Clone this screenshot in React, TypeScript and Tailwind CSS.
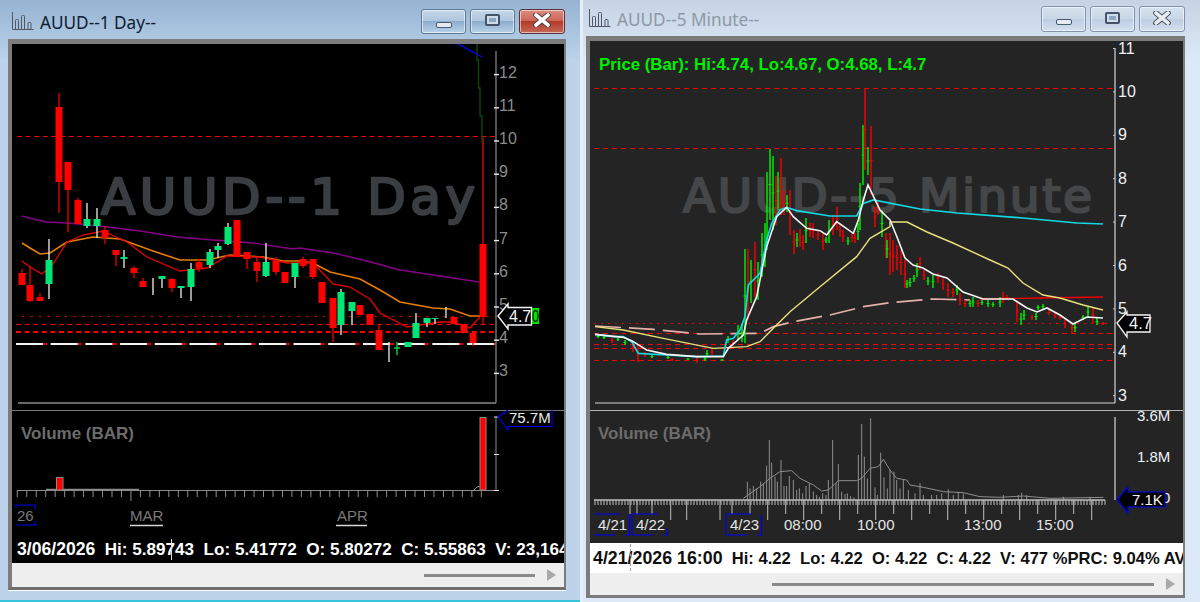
import React from "react";

type Candle = [number, number, number, number, number, "r" | "g"];
type Bar = [number, number, number, "r" | "g"];
type P = [number, number];

const pts = (a: P[]) => a.map((p) => p.join(",")).join(" ");
const zoomed = (ox: number, oy: number, a: P[]): P[] =>
	a.map(([x, y]) => [ox + x / 3, oy + y / 3] as P);

// x, wick top, wick bottom, body top, body bottom
const dayCandles: Candle[] = [
	[22, 269, 285, 273, 285, "r"],
	[30, 266, 302, 285, 301, "r"],
	[40, 293, 301, 297, 301, "r"],
	[49, 239, 299, 260, 284, "g"],
	[59, 93, 213, 107, 182, "r"],
	[68, 162, 232, 162, 190, "r"],
	[78, 198, 224, 200, 224, "r"],
	[87, 203, 228, 219, 226, "g"],
	[97, 208, 238, 219, 226, "g"],
	[105, 226, 244, 230, 238, "r"],
	[116, 250, 266, 250, 255, "r"],
	[124, 250, 268, 257, 259, "g"],
	[134, 266, 278, 268, 273, "r"],
	[143, 278, 287, 281, 287, "r"],
	[153, 278, 295, 286, 286, "g"],
	[162, 276, 288, 276, 279, "g"],
	[172, 278, 292, 279, 288, "r"],
	[181, 286, 298, 286, 288, "g"],
	[191, 263, 301, 269, 287, "g"],
	[199, 259, 272, 262, 268, "r"],
	[210, 249, 268, 252, 265, "g"],
	[218, 243, 258, 246, 250, "g"],
	[228, 223, 245, 227, 244, "g"],
	[237, 220, 257, 220, 257, "r"],
	[247, 252, 269, 252, 259, "r"],
	[257, 257, 282, 262, 271, "r"],
	[266, 243, 277, 262, 276, "g"],
	[276, 257, 275, 261, 272, "r"],
	[285, 272, 283, 272, 283, "r"],
	[295, 263, 288, 263, 277, "g"],
	[303, 257, 268, 259, 266, "r"],
	[313, 259, 279, 259, 277, "r"],
	[322, 282, 303, 282, 303, "r"],
	[333, 298, 342, 298, 328, "r"],
	[341, 289, 335, 292, 325, "g"],
	[352, 302, 325, 302, 311, "g"],
	[360, 305, 315, 305, 315, "r"],
	[370, 314, 325, 314, 325, "r"],
	[379, 325, 350, 330, 350, "r"],
	[389, 342, 362, 342, 342, "g"],
	[408, 342, 347, 342, 347, "g"],
	[416, 313, 338, 323, 338, "g"],
	[427, 318, 327, 318, 323, "g"],
	[435, 318, 324, 318, 319, "g"],
	[446, 307, 318, 307, 307, "g"],
	[454, 317, 324, 317, 324, "r"],
	[464, 324, 333, 324, 333, "r"],
	[473, 333, 346, 333, 343, "r"],
	[483, 137, 324, 244, 317, "r"],
];

const dayPurple: P[] = [[22, 216], [33, 219], [47, 222], [67, 223], [100, 226], [140, 231], [177, 237], [213, 240], [253, 243], [293, 249], [300, 248], [333, 253], [367, 261], [400, 270], [440, 276], [479, 282]];
const dayOrange: P[] = [[22, 243], [30, 248], [40, 254], [50, 253], [67, 242], [93, 237], [120, 239], [153, 251], [180, 260], [207, 260], [230, 255], [263, 257], [283, 261], [300, 261], [313, 263], [330, 272], [360, 279], [380, 290], [400, 302], [433, 308], [450, 309], [470, 316], [480, 316]];
const dayRed: P[] = [[22, 261], [30, 267], [42, 274], [53, 264], [67, 242], [83, 235], [103, 231], [127, 242], [147, 257], [180, 271], [207, 268], [227, 256], [260, 257], [287, 263], [313, 263], [333, 284], [350, 287], [370, 299], [380, 313], [407, 327], [440, 322], [453, 322], [470, 328], [480, 317]];

const minuteBars: Bar[] = [
	[598, 335, 338, "g"], [604, 336, 339, "g"], [612, 338, 343, "r"], [618, 338, 341, "g"], [625, 340, 345, "g"],
	[633, 342, 352, "r"], [638, 345, 362, "r"], [645, 352, 357, "r"], [652, 355, 358, "g"], [668, 356, 359, "g"],
	[672, 358, 361, "r"], [688, 358, 360, "g"], [697, 357, 363, "r"], [705, 357, 361, "g"], [707, 350, 357, "g"],
	[712, 349, 355, "r"], [722, 359, 361, "g"], [728, 336, 343, "g"], [733, 340, 346, "r"], [738, 325, 340, "g"],
	[742, 324, 342, "g"], [745, 249, 343, "g"], [748, 249, 320, "r"], [751, 260, 303, "g"], [755, 242, 297, "r"],
	[758, 262, 300, "g"], [762, 233, 277, "g"], [765, 223, 267, "g"], [767, 172, 250, "g"], [770, 149, 220, "g"],
	[773, 156, 230, "g"], [776, 176, 225, "r"], [778, 172, 210, "g"], [781, 158, 215, "r"], [784, 190, 215, "r"],
	[787, 195, 212, "g"], [790, 190, 235, "r"], [794, 230, 254, "r"], [797, 233, 247, "g"], [800, 229, 247, "r"],
	[803, 235, 250, "r"], [806, 218, 243, "g"], [810, 223, 237, "r"], [813, 223, 238, "r"], [818, 230, 240, "r"],
	[823, 233, 250, "r"], [826, 237, 243, "g"], [829, 220, 243, "g"], [833, 215, 235, "r"], [837, 207, 230, "r"],
	[840, 223, 237, "r"], [843, 230, 242, "r"], [848, 237, 245, "g"], [852, 233, 242, "r"], [855, 233, 243, "r"],
	[858, 223, 240, "g"], [860, 183, 230, "g"], [863, 125, 185, "g"], [865, 89, 170, "r"], [868, 147, 175, "g"],
	[871, 126, 195, "r"], [875, 207, 227, "r"], [878, 200, 215, "r"], [882, 210, 237, "g"], [886, 233, 258, "r"],
	[887, 240, 258, "g"], [890, 233, 275, "r"], [893, 240, 272, "r"], [897, 245, 270, "r"], [901, 250, 275, "r"],
	[905, 260, 288, "r"], [907, 280, 288, "g"], [910, 278, 287, "g"], [914, 275, 282, "g"], [917, 263, 277, "g"],
	[920, 257, 270, "r"], [924, 270, 280, "r"], [928, 277, 285, "g"], [933, 275, 288, "g"], [938, 273, 283, "r"],
	[943, 278, 290, "r"], [948, 283, 297, "r"], [953, 288, 297, "r"], [957, 285, 295, "g"], [960, 293, 305, "r"],
	[965, 300, 307, "r"], [970, 300, 307, "g"], [973, 297, 307, "g"], [978, 300, 307, "r"], [982, 300, 305, "g"],
	[988, 300, 307, "g"], [993, 302, 307, "g"], [1000, 297, 307, "g"], [1003, 292, 303, "r"], [1007, 295, 300, "r"],
	[1017, 302, 322, "r"], [1021, 313, 325, "g"], [1024, 310, 320, "g"], [1032, 315, 320, "r"], [1036, 313, 320, "g"],
	[1038, 305, 310, "g"], [1043, 304, 309, "g"], [1049, 310, 315, "r"], [1055, 312, 318, "r"], [1060, 315, 320, "r"],
	[1065, 320, 328, "r"], [1072, 323, 333, "r"], [1075, 323, 332, "g"], [1083, 315, 320, "g"], [1088, 307, 317, "g"],
	[1093, 307, 323, "r"], [1097, 318, 325, "g"], [1103, 322, 325, "r"],
];

const minuteCyan: P[] = [
	...zoomed(580, 200, [[45, 403], [100, 410], [130, 410], [155, 425], [175, 460], [260, 465], [350, 470], [430, 468], [440, 420], [460, 415], [480, 390], [495, 350], [505, 255], [540, 220], [560, 120], [575, 70], [600, 30], [620, 22], [650, 32], [750, 48], [830, 48], [850, 10], [880, 0]]),
	[920, 209], [957, 213], [1023, 218], [1077, 223], [1103, 224],
];
const minuteWhite: P[] = [
	...zoomed(580, 200, [[45, 403], [130, 412], [155, 422], [200, 450], [260, 463], [350, 470], [430, 470], [445, 445], [490, 405], [500, 360], [530, 290], [560, 140], [590, 50], [620, 22], [640, 50], [680, 85], [720, 92], [740, 105], [770, 65], [820, 100], [835, 60], [850, 0]]),
	[868, 185], [880, 210], [890, 220], [897, 237], [905, 258], [913, 265], [923, 268], [933, 274], [947, 278], [963, 292], [983, 299], [1013, 299], [1027, 308], [1037, 312], [1047, 308], [1060, 315], [1073, 324], [1087, 317], [1103, 318],
];
const minuteYellow: P[] = [
	...zoomed(580, 200, [[45, 380], [130, 390], [250, 415], [400, 445], [500, 440], [540, 425], [580, 385], [630, 335], [720, 260], [830, 170], [870, 115], [930, 80]]),
	[890, 222], [907, 222], [927, 232], [953, 243], [990, 260], [1008, 268], [1023, 283], [1043, 295], [1060, 298], [1083, 305], [1103, 310],
];
const minutePink: P[] = [
	...zoomed(580, 200, [[45, 378], [220, 388], [360, 402], [540, 400], [580, 380], [640, 365], [750, 345], [850, 320], [930, 308]]),
	[933, 299], [970, 300],
];

const volBars: P[] = [
	...zoomed(580, 400, [[502, 245], [510, 265], [520, 258], [530, 265], [542, 245], [550, 250], [560, 197], [568, 120], [575, 188], [585, 230], [592, 245], [603, 180], [612, 258], [620, 258], [628, 228], [640, 240], [650, 270], [658, 265], [668, 280], [678, 258], [688, 250], [700, 275], [710, 285], [718, 290], [728, 280], [738, 285], [745, 240], [758, 120], [768, 250], [775, 192], [785, 275], [795, 282], [802, 280], [812, 288], [822, 292], [835, 165], [845, 72], [853, 170], [862, 235], [872, 55], [885, 262], [892, 285], [902, 158], [912, 232], [922, 265]]),
	...zoomed(890, 400, [[0, 210], [12, 215], [20, 240], [30, 265], [40, 240], [55, 270], [75, 280], [90, 250], [100, 285], [125, 285], [140, 285], [155, 280], [175, 268], [190, 285], [205, 275], [220, 280], [340, 285], [385, 285], [395, 278], [410, 285], [520, 290], [600, 290]]),
];
const volAvg: P[] = [
	...zoomed(580, 400, [[490, 295], [540, 260], [570, 235], [600, 215], [635, 212], [660, 235], [700, 255], [725, 273], [745, 270], [775, 242], [830, 242], [845, 235], [870, 205], [895, 200], [910, 178]]),
	...zoomed(890, 400, [[0, 210], [20, 235], [50, 240], [60, 255], [100, 262], [160, 275], [220, 278], [270, 290], [330, 292], [400, 288], [480, 295], [640, 292]]),
];

const dayTicks = Array.from({ length: 50 }, (_, i) => 17.3 + i * 9.47);
const minuteTicks = Array.from({ length: 171 }, (_, i) => 595 + i * 3);
const longTicks = [670.7, 686.7, 720, 767.7, 803.7, 839.7, 875.7, 911.7, 947.7, 983.7, 1019.7, 1055.7, 1091.7];
const midTicks = [630, 637, 652, 732, 750, 785.7, 821.7, 857.7, 893.7, 929.7, 965.7, 1001.7, 1037.7, 1073.7];

const ChartIcon = () => (
	<svg width="23" height="19" viewBox="0 0 23 19" fill="none" stroke="#4f5864" strokeWidth="1">
		<path d="M1.5 0v17.5h21M4.5 17V8.5q0-1 1-1h1q1 0 1 1V17M10.5 17V4.5q0-1 1-1h1q1 0 1 1V17M17 17v-5.5q0-1 1-1h1q1 0 1 1V17" />
	</svg>
);

const WinButton = ({ kind, faded }: { kind: "min" | "max" | "close"; faded?: boolean }) => {
	const skin =
		kind === "close" && !faded
			? "border-[#5c2f3c] bg-[linear-gradient(#dc8d80,#cb6555_48%,#b23a28_50%,#c66a58)]"
			: faded
				? "border-[#7f93b0] bg-[linear-gradient(#d7e2ee,#c9d7e7_48%,#bccde0_50%,#d3e0ef)]"
				: "border-[#5f7a96] bg-[linear-gradient(#c6d7e9,#adc5de_48%,#8fadcc_50%,#b8d2e9)]";
	return (
		<div className={`flex items-center justify-center ${kind === "close" ? "w-[46px]" : "w-[45px]"} h-full rounded-[3px] border ${skin} shadow-[inset_0_0_0_1px_rgba(255,255,255,0.55)]`}>
			{kind === "min" && <div className="w-[16px] h-[6px] mt-[6px] rounded-[2px] border border-[#475a72] bg-[#e6ebf1]" />}
			{kind === "max" && (
				<div className="w-[15px] h-[12px] mb-[3px] rounded-[2px] border-2 border-[#43536a] bg-[#cfdbe8] flex items-center justify-center">
					<div className="w-[7px] h-[4px] bg-[#8ea5bf]" />
				</div>
			)}
			{kind === "close" && (
				<svg width="20" height="14" viewBox="0 0 20 14" className="mb-[3px]">
					<path d="M4 2l12 10M16 2L4 12" stroke="#3c3c46" strokeWidth="5.5" strokeLinecap="round" />
					<path d="M4 2l12 10M16 2L4 12" stroke={faded ? "#e8edf3" : "#ffffff"} strokeWidth="3.6" strokeLinecap="round" />
				</svg>
			)}
		</div>
	);
};

const ScrollPart = ({ width, right }: { width: string; right: string }) => (
	<div className={`flex items-center h-full justify-end ${right}`}>
		<div className={`${width} h-[3px] bg-[#8a8a8a]`} />
		<svg width="9" height="12" viewBox="0 0 9 12" className="ml-[12px]">
			<path d="M0 0l9 6-9 6z" fill="#a9a9a9" />
		</svg>
	</div>
);

const DayChart = () => (
	<svg viewBox="12 44 552 366" className="block w-[552px] h-[366px]" fontFamily="'Liberation Sans', Arial, sans-serif">
		<text x="101" y="214" fontFamily="'DejaVu Sans', sans-serif" fontWeight="400" fontSize="50" fill="#3a3d41" stroke="#3a3d41" strokeWidth="2.4" strokeLinejoin="round" textLength="374" lengthAdjust="spacing">AUUD--1 Day</text>
		<g strokeWidth="1">
			<line x1="17" x2="497" y1="136.5" y2="136.5" stroke="#ff0000" strokeDasharray="5 3.6" />
			<line x1="22" x2="497" y1="316.5" y2="316.5" stroke="#ee0000" strokeDasharray="2 6.6" />
			<line x1="16" x2="497" y1="324.5" y2="324.5" stroke="#ff0000" strokeDasharray="5 3.6" />
			<line x1="16" x2="497" y1="332" y2="332" stroke="#ff0000" strokeWidth="2" strokeDasharray="5 3.6" />
			<line x1="16" x2="496" y1="344" y2="344" stroke="#e00000" strokeWidth="2" strokeDasharray="31 3.7" />
			<line x1="16" x2="496" y1="344" y2="344" stroke="#f5f5f5" strokeWidth="2" strokeDasharray="27 7.7" />
		</g>
		<polyline points={pts(dayPurple)} fill="none" stroke="#860086" strokeWidth="1.4" />
		<polyline points={pts(dayOrange)} fill="none" stroke="#e67e00" strokeWidth="1.6" />
		<polyline points={pts(dayRed)} fill="none" stroke="#e80000" strokeWidth="1.3" />
		{dayCandles.map(([x, wt, wb, bt, bb, c]) => (
			<g key={x}>
				<line x1={x} x2={x} y1={wt} y2={wb} stroke={c === "r" ? "#f00000" : "#f0f0f0"} strokeWidth="1.3" />
				{bb > bt && <rect x={x - 3.5} y={bt} width="7" height={bb - bt} fill={c === "r" ? "#ff0000" : "#00e676"} />}
			</g>
		))}
		<path d="M397 342v13M394 348h6" stroke="#00c838" strokeWidth="1.5" />
		<polyline points="477,44 477,60 478.5,60 478.5,88 480,88 480,116 482,116 482,143" fill="none" stroke="#0c4d0c" strokeWidth="1.3" />
		<line x1="457" y1="43.5" x2="482" y2="57" stroke="#0000ff" strokeWidth="1.3" />
		<line x1="18" x2="496" y1="403" y2="403" stroke="#8a8a8a" strokeWidth="1.5" />
		<line x1="496" x2="496" y1="51" y2="403" stroke="#8a8a8a" strokeWidth="1.2" />
		{[12, 11, 10, 9, 8, 7, 6, 5, 4, 3].map((v) => {
			const y = 74.6 + (12 - v) * 33.2;
			return (
				<g key={v}>
					<line x1="494" x2="499" y1={y} y2={y} stroke="#e8e8e8" strokeWidth="1.4" />
					<text x="499" y={y + 3} fontSize="16" fill="#8c8c8c">{v}</text>
				</g>
			);
		})}
		<polygon points="498,316 508,304 508,307.5 531.5,307.5 531.5,325 508,325 508,329" fill="#000" stroke="#f5f5f5" strokeWidth="1.4" />
		<rect x="532" y="308" width="7" height="16" fill="#00e600" />
		<text x="532" y="322" fontSize="16" fill="#000" textLength="7" lengthAdjust="spacingAndGlyphs">0</text>
		<text x="509" y="322" fontSize="16" fill="#f5f5f5">4.7</text>
	</svg>
);

const DayVolume = () => (
	<svg viewBox="12 410 552 125" className="block w-[552px] h-[125px]" fontFamily="'Liberation Sans', Arial, sans-serif">
		<line x1="12" x2="564" y1="410.5" y2="410.5" stroke="#777" />
		<text x="21" y="439" fontSize="17" fontWeight="700" fill="#6c6c6c">Volume (BAR)</text>
		<line x1="17" x2="497" y1="490.5" y2="490.5" stroke="#8a8a8a" />
		<line x1="46" x2="139" y1="489.5" y2="489.5" stroke="#8a8a8a" strokeWidth="1.4" />
		{dayTicks.map((x, i) => (
			<line key={i} x1={x} x2={x} y1="490" y2={x > 129 && x < 132 || x > 336 && x < 338 ? 501 : 497} stroke="#909090" />
		))}
		<rect x="56.5" y="477.5" width="6.5" height="12.5" fill="#ff0000" stroke="#8a8a8a" />
		<rect x="480" y="417.5" width="6" height="72.5" fill="#ff0000" stroke="#8a8a8a" />
		<path d="M474 490q3-4 6-4" fill="none" stroke="#8a8a8a" />
		<line x1="496" x2="496" y1="417" y2="490" stroke="#8a8a8a" />
		<path d="M494 417h5M494 454.5h5M494 490.5h5" stroke="#e0e0e0" />
		<polygon points="498,417 508,410 508,413 552,413 552,426 508,426 508,430" fill="#000" />
		<path d="M552 410v16.5H508v3.5L498 417l10-7" fill="none" stroke="#0000f0" strokeWidth="1.2" />
		<text x="509" y="423" fontSize="15" fill="#e8e8e8">75.7M</text>
		<path d="M16 508v-3h19v4M16.5 525h18.5v-4" fill="none" stroke="#0000f0" strokeWidth="1.2" />
		<text x="17" y="521" fontSize="15" fill="#7a7a7a">26</text>
		<text x="130" y="521" fontSize="15" fill="#7a7a7a">MAR</text>
		<line x1="130" x2="163" y1="525.5" y2="525.5" stroke="#d8d8d8" strokeWidth="1.5" />
		<text x="337" y="521" fontSize="15" fill="#7a7a7a">APR</text>
		<line x1="336" x2="367" y1="525.5" y2="525.5" stroke="#d8d8d8" strokeWidth="1.5" />
	</svg>
);

const MinuteChart = () => (
	<svg viewBox="590 41 593 369" className="block w-[593px] h-[369px]" fontFamily="'Liberation Sans', Arial, sans-serif">
		<text x="683" y="212" fontFamily="'DejaVu Sans', sans-serif" fontWeight="400" fontSize="47" fill="#444648" stroke="#444648" strokeWidth="2.2" strokeLinejoin="round" textLength="409" lengthAdjust="spacing">AUUD--5 Minute</text>
		<text x="599" y="70" fontSize="16.8" fontWeight="700" fill="#00f000">{"Price (Bar): Hi:4.74, Lo:4.67, O:4.68, L:4.7"}</text>
		{[88.5, 148.5, 333.5, 344.5, 348.5, 360.5].map((y) => (
			<line key={y} x1="594" x2="1112" y1={y} y2={y} stroke="#ff0000" strokeWidth="1" strokeDasharray="5 4" />
		))}
		<line x1="594" x2="1112" y1="323.5" y2="323.5" stroke="#ee0000" strokeWidth="1" strokeDasharray="2 5" />
		<polyline points={pts(minutePink)} fill="none" stroke="#e5b0aa" strokeWidth="1.7" strokeDasharray="26 8" />
		<polyline points="980,299 1040,298 1103,297" fill="none" stroke="#f00000" strokeWidth="1.4" />
		{minuteBars.map(([x, t, b, c], i) => (
			<g key={i} stroke={c === "r" ? "#f00000" : "#00e800"}>
				<line x1={x} x2={x} y1={t} y2={b} strokeWidth="1.5" />
				<line x1={x - 1.5} x2={x + 1.5} y1={(t + b) / 2} y2={(t + b) / 2} strokeWidth="1" />
			</g>
		))}
		<polyline points={pts(minuteYellow)} fill="none" stroke="#e8e07c" strokeWidth="1.4" />
		<polyline points={pts(minuteCyan)} fill="none" stroke="#12d8e4" strokeWidth="1.7" />
		<polyline points={pts(minuteWhite)} fill="none" stroke="#f4f4f4" strokeWidth="1.6" />
		<line x1="595" x2="1115" y1="403" y2="403" stroke="#9a9a9a" strokeWidth="1.5" />
		<line x1="1115" x2="1115" y1="48" y2="403" stroke="#c8c8c8" strokeWidth="1.3" />
		{[11, 10, 9, 8, 7, 6, 5, 4, 3].map((v) => {
			const y = 48.5 + (11 - v) * 43.4;
			return (
				<g key={v}>
					<line x1="1113" x2="1115" y1={y} y2={y} stroke="#c8c8c8" />
					<text x="1118" y={y + 5} fontSize="16" fill="#eef2f6">{v}</text>
				</g>
			);
		})}
		<polygon points="1117,323 1127,312 1127,315 1150,315 1150,332 1127,332 1127,337" fill="#000" stroke="#f5f5f5" strokeWidth="1.3" />
		<text x="1129" y="329" fontSize="16.5" fill="#f5f5f5">4.7</text>
	</svg>
);

const MinuteVolume = () => (
	<svg viewBox="590 410 593 133" className="block w-[593px] h-[133px]" fontFamily="'Liberation Sans', Arial, sans-serif">
		<line x1="590" x2="1183" y1="410.5" y2="410.5" stroke="#b4b4b4" />
		<text x="598" y="439" fontSize="17" fontWeight="700" fill="#6c6c6c">Volume (BAR)</text>
		{volBars.map(([x, y], i) => (
			<line key={i} x1={x} x2={x} y1={y} y2="500" stroke="#8e8e8e" strokeWidth="1" />
		))}
		<polyline points={pts(volAvg)} fill="none" stroke="#8e8e8e" strokeWidth="1" />
		<line x1="594" x2="1105" y1="500" y2="500" stroke="#bdbdbd" strokeWidth="1.5" />
		{minuteTicks.map((x) => (
			<line key={x} x1={x} x2={x} y1="500" y2="505" stroke="#bdbdbd" />
		))}
		{longTicks.map((x) => (
			<line key={x} x1={x} x2={x} y1="500" y2="520" stroke="#bdbdbd" />
		))}
		{midTicks.map((x) => (
			<line key={x} x1={x} x2={x} y1="500" y2="514" stroke="#bdbdbd" />
		))}
		<line x1="1115" x2="1115" y1="417" y2="500" stroke="#c8c8c8" strokeWidth="1.3" />
		<text x="1137" y="421" fontSize="15" fill="#eef2f6">3.6M</text>
		<text x="1137" y="462" fontSize="15" fill="#eef2f6">1.8M</text>
		<text x="1162" y="503" fontSize="15" fill="#eef2f6">0</text>
		<polygon points="1117,499.5 1128,487 1128,492 1165,492 1165,507 1128,507 1128,513" fill="#000" stroke="#0000f0" strokeWidth="1.2" />
		<text x="1132" y="505" fontSize="15" fill="#f5f5f5">7.1K</text>
		<path d="M594 514h26M594 535h21M625 535h4.5V514M632 535v-21h26M632 535h21M663 535h4.5v-7M726 535v-21h26M726 535h21M757 535h4.5v-20" fill="none" stroke="#0000f0" strokeWidth="1.2" />
		<text x="598" y="530" fontSize="15" fill="#e6e6e6">4/21</text>
		<text x="636" y="530" fontSize="15" fill="#e6e6e6">4/22</text>
		<text x="730" y="530" fontSize="15" fill="#e6e6e6">4/23</text>
		<text x="784" y="530" fontSize="15" fill="#e6e6e6">08:00</text>
		<text x="857" y="530" fontSize="15" fill="#e6e6e6">10:00</text>
		<text x="964" y="530" fontSize="15" fill="#e6e6e6">13:00</text>
		<text x="1036" y="530" fontSize="15" fill="#e6e6e6">15:00</text>
	</svg>
);

export default function App() {
	return (
		<div className="flex w-[1200px] h-[602px] overflow-hidden bg-[#e6eff8] font-['Liberation_Sans',Arial,sans-serif]">
			{/* active window */}
			<div className="flex flex-col w-[580px] h-full bg-linear-to-b from-[#95b3d2] from-0% to-[#bcd3ea] to-[10%] border-b-2 border-b-[#35c3dc]">
				<div className="flex items-start h-[39px] pt-[9px] pl-[11px] pr-[15px]">
					<div className="mt-[3px]">
						<ChartIcon />
					</div>
					<span className="ml-[6px] mt-[2px] text-[17.2px] leading-[23px] text-[#0f2033] font-['Noto_Sans',sans-serif]">AUUD--1 Day--</span>
					<div className="flex gap-[4px] h-[25px] ml-auto">
						<WinButton kind="min" />
						<WinButton kind="max" />
						<WinButton kind="close" />
					</div>
				</div>
				<div className="w-[558px] ml-[8px] border-l-4 border-r-2 border-t-[5px] border-b-[3px] border-x-[#7c7c7c] border-t-[#7c7c7c] border-b-[#6e6e6e] bg-black shadow-[0_1px_0_#ffffff]">
					<DayChart />
					<DayVolume />
					<div className="relative h-[28px] pl-[5px] leading-[28px] text-[17.1px] font-bold text-white whitespace-pre overflow-hidden bg-black">
						<span className="text-[17.6px]">3/06/2026</span>
						{"  Hi: 5.89743  Lo: 5.41772  O: 5.80272  C: 5.55863  V: 23,164,592"}
						<div className="absolute left-[159px] top-[4px] w-px h-[21px] bg-[#d8d8d8]" />
					</div>
					<div className="h-[24px] bg-[#eeeeee]">
						<ScrollPart width="w-[111px]" right="pr-[8px]" />
					</div>
				</div>
			</div>
			{/* inactive window */}
			<div className="flex flex-col w-[617px] h-full ml-[3px] bg-linear-to-b from-[#c5d3e3] to-[#dde9f6] to-[10%]">
				<div className="flex items-start h-[36px] pt-[6px] pl-[5px] pr-[15px]">
					<div className="mt-[3px]">
						<ChartIcon />
					</div>
					<span className="ml-[6px] mt-[2px] text-[17.2px] leading-[23px] text-[#8d98a6] font-['Noto_Sans',sans-serif]">AUUD--5 Minute--</span>
					<div className="flex gap-[4px] h-[26px] ml-auto">
						<WinButton kind="min" faded />
						<WinButton kind="max" faded />
						<WinButton kind="close" faded />
					</div>
				</div>
				<div className="w-[599px] ml-[3px] border-l-4 border-r-2 border-t-[5px] border-b-[3px] border-[#7c7c7c] bg-[#242424]">
					<MinuteChart />
					<MinuteVolume />
					<div className="relative h-[30px] pl-[3px] leading-[30px] text-[16.6px] font-bold text-[#101010] whitespace-pre overflow-hidden bg-white">
						<span className="text-[17.8px]">4/21/2026 16:00</span>
						{"  Hi: 4.22  Lo: 4.22  O: 4.22  C: 4.22  V: 477 %PRC: 9.04% AVG: 1.02M"}
						<div className="absolute left-[40px] top-[1px] h-[27px] border-l border-dashed border-[#9a9a9a]" />
					</div>
					<div className="h-[22px] bg-[#eeeeee]">
						<ScrollPart width="w-[382px]" right="pr-[8px]" />
					</div>
				</div>
			</div>
		</div>
	);
}
